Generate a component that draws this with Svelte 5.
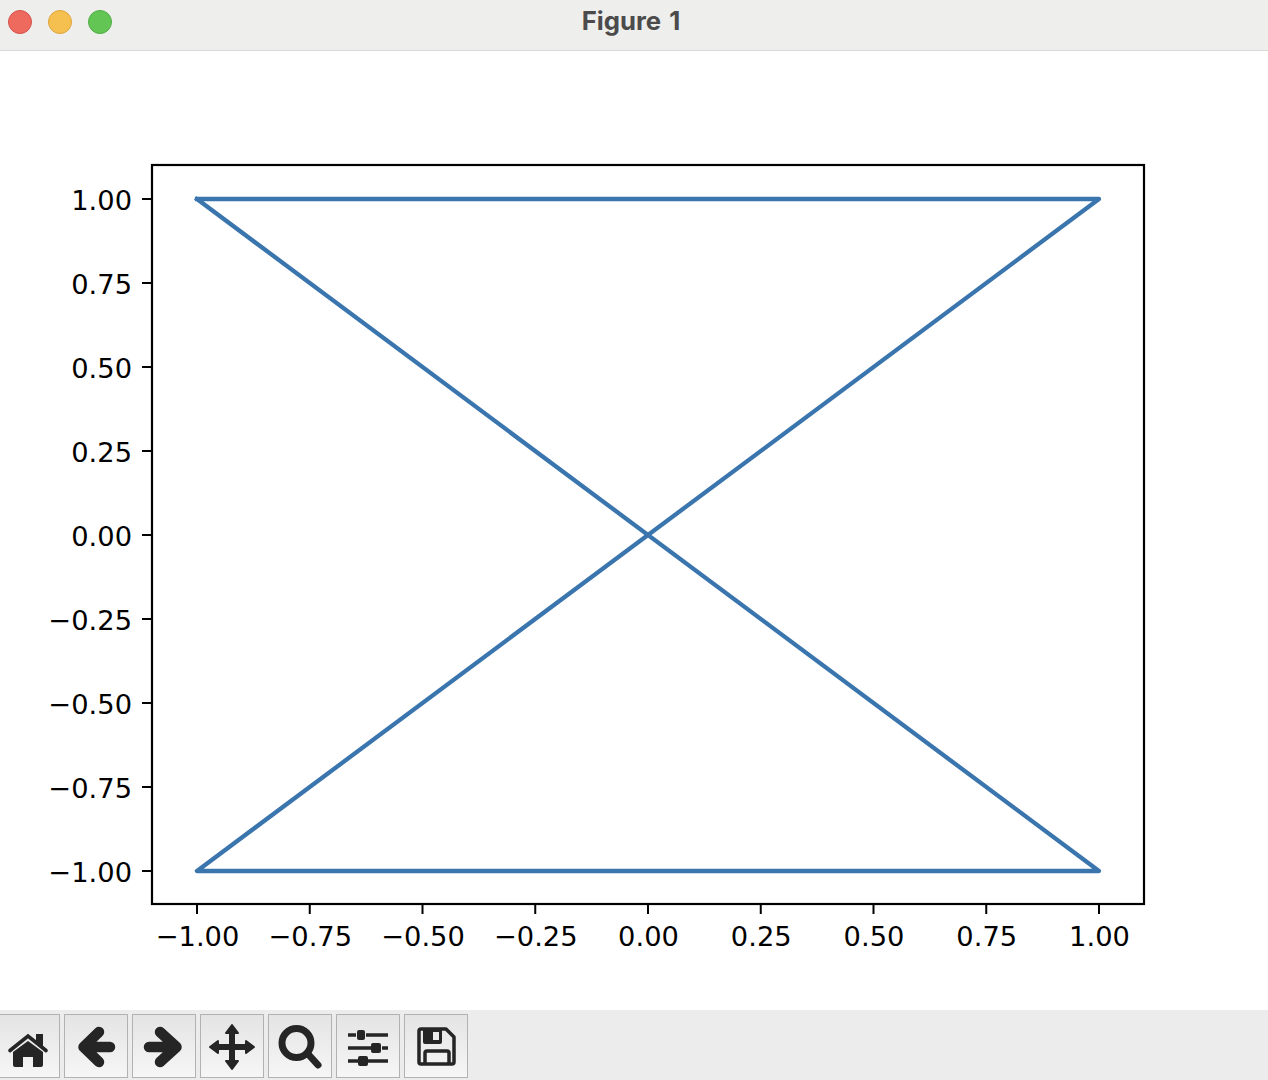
<script lang="ts">
  const xLeft = 197;
  const xRight = 1099;
  const yTop = 199;
  const yBottom = 871;

  const ticks = [-1, -0.75, -0.5, -0.25, 0, 0.25, 0.5, 0.75, 1];

  const toX = (v: number) => xLeft + ((v + 1) / 2) * (xRight - xLeft);
  const toY = (v: number) => yBottom - ((v + 1) / 2) * (yBottom - yTop);
  const label = (v: number) => (v < 0 ? '\u2212' : '') + Math.abs(v).toFixed(2);

  const points = [[-1, 1], [1, 1], [-1, -1], [1, -1], [-1, 1]];
  const linePoints = points.map(([x, y]) => `${toX(x)},${toY(y)}`).join(' ');
</script>

<div class="window">
  <header class="titlebar">
    <div class="lights">
      <span class="light red"></span>
      <span class="light yellow"></span>
      <span class="light green"></span>
    </div>
    <div class="title">Figure 1</div>
  </header>

  <main class="canvas">
    <svg viewBox="0 51 1268 959" width="1268" height="959">
      {#each ticks as t}
        <line class="tick" x1={toX(t)} x2={toX(t)} y1="904" y2="914" />
        <text class="tick-label" x={toX(t) + 0.5} y="946" text-anchor="middle">{label(t)}</text>
        <line class="tick" x1="142" x2="152" y1={toY(t)} y2={toY(t)} />
        <text class="tick-label" x="132" y={toY(t) + 11} text-anchor="end">{label(t)}</text>
      {/each}
      <polyline class="series" points={linePoints} />
      <rect class="spines" x="152" y="165" width="992" height="739" />
    </svg>
  </main>

  <footer class="toolbar">
    <button class="tool" aria-label="Home">
      <svg viewBox="0 0 64 64">
        <path class="ink" d="M40 20H47V33L40 28Z" />
        <path class="roof" d="M14 36.5 32 22 50 36.5" />
        <path class="ink" d="M32 27 47 38V51A2 2 0 0 1 45 53H37V43H27V53H19A2 2 0 0 1 17 51V38Z" />
      </svg>
    </button>
    <button class="tool" aria-label="Back">
      <svg viewBox="0 0 64 64">
        <path class="arrow" d="M20 33H46M35 18 19.5 33 35 48" />
      </svg>
    </button>
    <button class="tool" aria-label="Forward">
      <svg viewBox="0 0 64 64">
        <path class="arrow" d="M17 33H43M28 18 44.5 33 28 48" />
      </svg>
    </button>
    <button class="tool" aria-label="Pan">
      <svg viewBox="0 0 64 64">
        <path class="move" d="M32 16V50M15 33H49" />
        <path class="ink head" d="M32 11 38 19H26ZM32 55 38 47H26ZM10 33 18 27V39ZM54 33 46 27V39Z" />
      </svg>
    </button>
    <button class="tool" aria-label="Zoom">
      <svg viewBox="0 0 64 64">
        <circle class="lens" cx="28.5" cy="29" r="14.5" />
        <path class="handle" d="M40 40 50 51" />
      </svg>
    </button>
    <button class="tool" aria-label="Configure">
      <svg viewBox="0 0 64 64">
        <path class="slider" d="M12 21H20M30 21H52M12 34H35M46 34H52M12 47H22M32 47H52" />
        <rect class="ink" x="21" y="16" width="8" height="10" rx="2" />
        <rect class="ink" x="35" y="29" width="10" height="10" rx="2" />
        <rect class="ink" x="22" y="42" width="10" height="10" rx="2" />
      </svg>
    </button>
    <button class="tool" aria-label="Save">
      <svg viewBox="0 0 64 64">
        <path class="disk" d="M17 15H42L50 23V48A2 2 0 0 1 48 50H17A2 2 0 0 1 15 48V17A2 2 0 0 1 17 15Z" />
        <path class="ink" fill-rule="evenodd" d="M19 15H38V28A2 2 0 0 1 36 30H21A2 2 0 0 1 19 28ZM29 18V26H35V18Z" />
        <path class="disk" d="M21 50V39A2 2 0 0 1 23 37H43A2 2 0 0 1 45 39V50" />
      </svg>
    </button>
  </footer>
</div>

<style>
  :global(body) {
    margin: 0;
    background: #fff;
  }

  .window {
    width: 1268px;
    height: 1080px;
    display: flex;
    flex-direction: column;
    overflow: hidden;
    font-family: "DejaVu Sans", sans-serif;
  }

  .titlebar {
    height: 50px;
    flex: none;
    display: flex;
    align-items: center;
    position: relative;
    background: #eeeeed;
    border-bottom: 1px solid #d9d9d9;
  }

  .lights {
    display: flex;
    gap: 16px;
    padding: 0 0 6px 8px;
  }

  .light {
    width: 24px;
    height: 24px;
    box-sizing: border-box;
    border-radius: 50%;
    border: 1px solid;
  }

  .red {
    background: #ee6a5f;
    border-color: #d5524a;
  }

  .yellow {
    background: #f6c050;
    border-color: #dea43a;
  }

  .green {
    background: #62c554;
    border-color: #4fae44;
  }

  .title {
    position: absolute;
    left: 0;
    right: 6px;
    top: 6px;
    text-align: center;
    font-family: Inter, "Liberation Sans", sans-serif;
    font-weight: 700;
    font-size: 25.7px;
    line-height: 30px;
    word-spacing: 2px;
    color: #4b4b4b;
  }

  .canvas {
    flex: 1;
    background: #fff;
  }

  .canvas svg {
    display: block;
  }

  .tick {
    stroke: #000;
    stroke-width: 2;
  }

  .tick-label {
    font-family: "DejaVu Sans", sans-serif;
    font-size: 27.3px;
    fill: #000;
  }

  .series {
    fill: none;
    stroke: #3a75ae;
    stroke-width: 4.3;
    stroke-linejoin: round;
    stroke-linecap: square;
  }

  .spines {
    fill: none;
    stroke: #000;
    stroke-width: 2.2;
  }

  .toolbar {
    height: 70px;
    flex: none;
    box-sizing: border-box;
    display: flex;
    gap: 4px;
    padding-top: 4px;
    margin-left: -4px;
    background: #ececec;
  }

  .tool {
    width: 64px;
    height: 64px;
    flex: none;
    box-sizing: border-box;
    padding: 0;
    border: 1px solid #b2b2b2;
    border-radius: 0;
    background: linear-gradient(#e4e4e4, #f6f6f6);
  }

  .tool svg {
    display: block;
    width: 64px;
    height: 64px;
    margin: -1px;
  }

  .ink {
    fill: #252525;
  }

  .head {
    stroke: #252525;
    stroke-width: 2;
    stroke-linejoin: round;
  }

  .roof {
    fill: none;
    stroke: #252525;
    stroke-width: 3.6;
    stroke-linejoin: miter;
    stroke-linecap: round;
  }

  .arrow {
    fill: none;
    stroke: #252525;
    stroke-width: 10.5;
    stroke-linecap: round;
    stroke-linejoin: round;
  }

  .move {
    fill: none;
    stroke: #252525;
    stroke-width: 6;
  }

  .lens {
    fill: none;
    stroke: #252525;
    stroke-width: 7;
  }

  .handle {
    fill: none;
    stroke: #252525;
    stroke-width: 7;
    stroke-linecap: round;
  }

  .slider {
    fill: none;
    stroke: #252525;
    stroke-width: 3.4;
  }

  .disk {
    fill: none;
    stroke: #252525;
    stroke-width: 3.5;
    stroke-linejoin: round;
  }
</style>
